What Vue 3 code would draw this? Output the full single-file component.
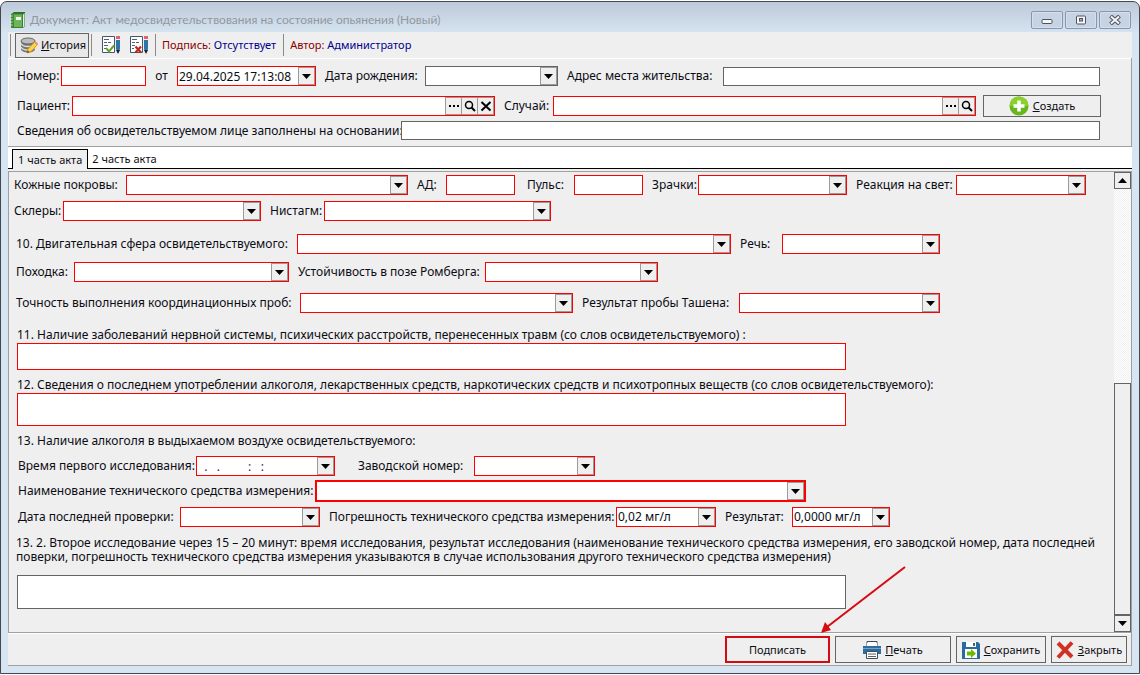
<script setup>
import { ref } from 'vue'

const activeTab = ref(1)

const examinationRows = [
  {
    name: 'skin',
    fields: [
      { id: 'skin', label: 'Кожные покровы:', kind: 'select' },
      { id: 'pressure', label: 'АД:', kind: 'text' },
      { id: 'pulse', label: 'Пульс:', kind: 'text', spaced: true },
      { id: 'pupils', label: 'Зрачки:', kind: 'select' },
      { id: 'light', label: 'Реакция на свет:', kind: 'select' },
    ],
  },
  {
    name: 'sclera',
    fields: [
      { id: 'sclera', label: 'Склеры:', kind: 'select' },
      { id: 'nystagmus', label: 'Нистагм:', kind: 'select' },
    ],
  },
  {
    name: 'motor',
    fields: [
      { id: 'motor', label: '10. Двигательная сфера освидетельствуемого:', kind: 'select' },
      { id: 'speech', label: 'Речь:', kind: 'select' },
    ],
  },
  {
    name: 'gait',
    fields: [
      { id: 'gait', label: 'Походка:', kind: 'select' },
      { id: 'romberg', label: 'Устойчивость в позе Ромберга:', kind: 'select' },
    ],
  },
  {
    name: 'accuracy',
    fields: [
      { id: 'accuracy', label: 'Точность выполнения координационных проб:', kind: 'select' },
      { id: 'tashen', label: 'Результат пробы Ташена:', kind: 'select' },
    ],
  },
]

const blank = (count) => '\u00a0'.repeat(count)
const emptyTimestamp = blank(2) + '.' + blank(3) + '.' + blank(9) + ':' + blank(3) + ':'

const alcoholRows = [
  {
    name: 'first-test',
    fields: [
      { id: 'first-time', label: 'Время первого исследования:', kind: 'date', value: emptyTimestamp, muted: true },
      { id: 'serial', label: 'Заводской номер:', kind: 'select', wide: true },
    ],
  },
  {
    name: 'device',
    fields: [
      { id: 'device', label: 'Наименование технического средства измерения:', kind: 'select', focus: true },
    ],
  },
  {
    name: 'check',
    fields: [
      { id: 'check-date', label: 'Дата последней проверки:', kind: 'date', value: '' },
      { id: 'error', label: 'Погрешность технического средства измерения:', kind: 'select', value: '0,02 мг/л' },
      { id: 'result', label: 'Результат:', kind: 'select', value: '0,0000 мг/л' },
    ],
  },
]
</script>

<template>
  <div class="window">
    <header class="titlebar">
      <svg class="book" viewBox="0 0 16 18" aria-hidden="true">
        <path d="M2 2.500 4 1h11v14l-2 2H2z" fill="#2f6b2b" />
        <path d="M13 3.500 14.500 2v13L13 16.500z" fill="#e7efe2" />
        <path d="M1.500 3h11v13.500h-11z" fill="#6db55a" stroke="#3c7f33" />
        <path d="M2 3.500h2V16H2z" fill="#3f8a38" />
        <path d="M6 6h5v3H6z" fill="#f1f8ea" />
        <path d="M0 5h2.500M0 8h2.500M0 11h2.500M0 14h2.500" stroke="#dce9d7" />
      </svg>
      <h1>Документ: Акт медосвидетельствования на состояние опьянения (Новый)</h1>
      <div class="window-buttons">
        <button type="button" aria-label="Свернуть">
          <svg viewBox="0 0 12 10"><rect x="1" y="4.500" width="10" height="4" rx="1" fill="#f6f6f6" stroke="#4d5262" /></svg>
        </button>
        <button type="button" aria-label="Развернуть">
          <svg viewBox="0 0 12 10"><rect x="1.500" y="1" width="9" height="8" rx="1" fill="#f6f6f6" stroke="#4d5262" /><rect x="4.500" y="3.500" width="3" height="2.500" fill="#9fb3c9" stroke="#4d5262" /></svg>
        </button>
        <button type="button" aria-label="Закрыть окно">
          <svg viewBox="0 0 12 10"><path d="m1.500 1 9 8M10.500 1l-9 8" stroke="#4d5262" stroke-width="4" /><path d="m2 1.500 8 7M10 1.500l-8 7" stroke="#f6f6f6" stroke-width="2" /></svg>
        </button>
      </div>
    </header>

    <main class="client">
      <nav class="toolbar" aria-label="Панель документа">
        <i class="divider"></i>
        <button type="button" class="history">
          <svg viewBox="0 0 18 17" aria-hidden="true">
            <path d="M1 4v8c0 2 3 3.500 7 3.500s7-1.500 7-3.500V4z" fill="#777" />
            <path d="M1 6.500c1 2 4 3 7 3s6-1 7-3M1 10c1 2 4 3 7 3s6-1 7-3" fill="none" stroke="#e0e0e0" stroke-width="1.500" />
            <ellipse cx="8" cy="4" rx="7" ry="3" fill="#bcbcbc" stroke="#666" />
            <path d="m7 16 1-4 6.500-7 3 2.500-6.500 7z" fill="#ffd43b" stroke="#c98b16" stroke-width=".8" />
            <path d="m14 5.500 1.500-1.500 2.500 2.500-1.300 1.500z" fill="#f08c86" />
            <path d="m7 16 .7-2.500L9.500 15z" fill="#654321" />
          </svg>
          <span><u>И</u>стория</span>
        </button>
        <i class="divider"></i>
        <button type="button" class="tool" aria-label="Подписать документ">
          <svg viewBox="0 0 18 18" aria-hidden="true">
            <path d="M.5.500h12v16H.500z" fill="#fff" stroke="#41596a" />
            <path d="M2 3.500h5M2 6.500h3M6 6.500h3M2 9.500h4M2 12.500h2" stroke="#50616e" />
            <path d="m4 12 3 3.500 5-6" fill="none" stroke="#67a22d" stroke-width="2" />
            <path d="M14 4h4v9l-2 4-2-4z" fill="#2c74aa" /><path d="M14 0h4v3h-4z" fill="#e8606b" /><path d="M14 14h4l-2 4z" fill="#222" />
          </svg>
        </button>
        <button type="button" class="tool" aria-label="Отменить подпись">
          <svg viewBox="0 0 18 18" aria-hidden="true">
            <path d="M.5.500h12v16H.500z" fill="#fff" stroke="#41596a" />
            <path d="M2 3.500h5M2 6.500h3M6 6.500h3M2 9.500h3M2 12.500h2" stroke="#50616e" />
            <path d="m5.500 10.500 5.500 6M11 10.500l-5.500 6" stroke="#c3251b" stroke-width="2.200" />
            <path d="M14 4h4v9l-2 4-2-4z" fill="#2c74aa" /><path d="M14 0h4v3h-4z" fill="#e8606b" /><path d="M14 14h4l-2 4z" fill="#222" />
          </svg>
        </button>
        <i class="divider"></i>
        <p class="info"><span>Подпись:</span> Отсутствует</p>
        <i class="divider"></i>
        <p class="info"><span>Автор:</span> Администратор</p>
      </nav>

      <section class="head">
        <div class="head-row first">
          <label for="number">Номер:</label>
          <input id="number" class="box" type="text" />
          <label for="date" class="center">от</label>
          <div class="combo">
            <input id="date" type="text" value="29.04.2025 17:13:08" />
            <button type="button" class="drop" aria-label="Выбрать дату"><svg viewBox="0 0 9 5"><path d="M0 0h9L4.500 5z" /></svg></button>
          </div>
          <label for="birth" class="after">Дата рождения:</label>
          <div class="combo plain">
            <input id="birth" type="text" />
            <button type="button" class="drop" aria-label="Выбрать дату рождения"><svg viewBox="0 0 9 5"><path d="M0 0h9L4.500 5z" /></svg></button>
          </div>
          <label for="address" class="after">Адрес места жительства:</label>
          <input id="address" class="box plain" type="text" />
        </div>
        <div class="head-row second">
          <label for="patient">Пациент:</label>
          <div class="lookup">
            <input id="patient" type="text" />
            <button type="button" aria-label="Список пациентов"><svg viewBox="0 0 12 12"><path d="M1 5h2v2H1zM5 5h2v2H5zM9 5h2v2H9z" /></svg></button>
            <button type="button" aria-label="Найти пациента"><svg viewBox="0 0 12 12"><circle cx="5" cy="5" r="3.500" fill="none" stroke="#000" stroke-width="1.500" /><path d="m7.500 7.500 3.500 3.500" stroke="#000" stroke-width="2" /></svg></button>
            <button type="button" aria-label="Очистить пациента"><svg viewBox="0 0 12 12"><path d="m1.500 2 9 8.500M10.500 2l-9 8.500" stroke="#000" stroke-width="2" /></svg></button>
          </div>
          <label for="case" class="after">Случай:</label>
          <div class="lookup">
            <input id="case" type="text" />
            <button type="button" aria-label="Список случаев"><svg viewBox="0 0 12 12"><path d="M1 5h2v2H1zM5 5h2v2H5zM9 5h2v2H9z" /></svg></button>
            <button type="button" aria-label="Найти случай"><svg viewBox="0 0 12 12"><circle cx="5" cy="5" r="3.500" fill="none" stroke="#000" stroke-width="1.500" /><path d="m7.500 7.500 3.500 3.500" stroke="#000" stroke-width="2" /></svg></button>
          </div>
          <button type="button" class="command create">
            <svg viewBox="0 0 20 20" aria-hidden="true"><circle cx="10" cy="10" r="9.500" fill="#67b51f" /><path d="M.5 10a9.500 9.500 0 0 1 19 0z" fill="#8bd02c" /><path d="M10 4.500v11M4.500 10h11" stroke="#fff" stroke-width="3.500" /></svg>
            <span><u>С</u>оздать</span>
          </button>
        </div>
        <div class="head-row third">
          <label for="basis">Сведения об освидетельствуемом лице заполнены на основании:</label>
          <input id="basis" class="box plain" type="text" />
        </div>
      </section>

      <div class="tabs" role="tablist">
        <button type="button" role="tab" :class="{ active: activeTab === 1 }" :aria-selected="activeTab === 1" @click="activeTab = 1">1 часть акта</button>
        <button type="button" role="tab" :class="{ active: activeTab === 2 }" :aria-selected="activeTab === 2" @click="activeTab = 2">2 часть акта</button>
      </div>

      <section class="sheet">
        <form class="form" @submit.prevent>
          <div v-for="row in examinationRows" :key="row.name" :class="['row', row.name]">
            <template v-for="field in row.fields" :key="field.id">
              <label :for="field.id" :class="{ spaced: field.spaced }">{{ field.label }}</label>
              <div v-if="field.kind === 'select'" class="combo">
                <select :id="field.id"><option></option></select>
                <span class="drop"><svg viewBox="0 0 9 5"><path d="M0 0h9L4.500 5z" /></svg></span>
              </div>
              <input v-else :id="field.id" class="box" type="text" />
            </template>
          </div>

          <label for="diseases" class="heading diseases">11. Наличие заболеваний нервной системы, психических расстройств, перенесенных травм (со слов освидетельствуемого) :</label>
          <textarea id="diseases" class="note required short"></textarea>
          <label for="usage" class="heading usage">12. Сведения о последнем употреблении алкоголя, лекарственных средств, наркотических средств и психотропных веществ (со слов освидетельствуемого):</label>
          <textarea id="usage" class="note required"></textarea>
          <h2 class="heading alcohol">13. Наличие алкоголя в выдыхаемом воздухе освидетельствуемого:</h2>

          <div v-for="row in alcoholRows" :key="row.name" :class="['row', row.name]">
            <template v-for="field in row.fields" :key="field.id">
              <label :for="field.id" :class="{ wide: field.wide }">{{ field.label }}</label>
              <div :class="['combo', { focus: field.focus }]">
                <select v-if="field.kind === 'select'" :id="field.id"><option>{{ field.value }}</option></select>
                <input v-else :id="field.id" type="text" :value="field.value" :class="{ muted: field.muted }" />
                <span v-if="field.kind === 'select'" class="drop"><svg viewBox="0 0 9 5"><path d="M0 0h9L4.500 5z" /></svg></span>
                <button v-else type="button" class="drop" aria-label="Выбрать дату"><svg viewBox="0 0 9 5"><path d="M0 0h9L4.500 5z" /></svg></button>
              </div>
            </template>
          </div>

          <label for="second" class="heading second-test">13. 2. Второе исследование через 15 – 20 минут: время исследования, результат исследования (наименование технического средства измерения, его заводской номер, дата последней поверки, погрешность технического средства измерения указываются в случае использования другого технического средства измерения)</label>
          <textarea id="second" class="note tall"></textarea>
        </form>
        <div class="scrollbar">
          <button type="button" aria-label="Вверх"><svg viewBox="0 0 9 5"><path d="M0 5h9L4.500 0z" /></svg></button>
          <div class="track"></div>
          <div class="thumb"></div>
          <button type="button" aria-label="Вниз"><svg viewBox="0 0 9 5"><path d="M0 0h9L4.500 5z" /></svg></button>
        </div>
      </section>

      <footer class="footer">
        <div class="sign-wrap">
          <button type="button" class="command sign">Подписать</button>
          <svg class="pointer" viewBox="0 0 88 70" aria-hidden="true"><path d="M85 2 7 62" stroke="#d50b12" stroke-width="2" /><path d="m1 68 4-11 6 8z" fill="#d50b12" /></svg>
        </div>
        <button type="button" class="command print">
          <svg viewBox="0 0 18 18" aria-hidden="true"><path d="M4 .500h10V7H4z" fill="#fff" stroke="#404b54" /><path d="M0 5h18v8H0z" fill="#2d6c9e" /><path d="M4 5h10V2H4z" fill="#fff" /><path d="M0 7.500h18" stroke="#75a3c5" /><path d="M3.500 10.500h11v7h-11z" fill="#fff" stroke="#404b54" /><path d="M5 13h8M5 15.500h8" stroke="#56616b" /></svg>
          <span><u>П</u>ечать</span>
        </button>
        <button type="button" class="command save">
          <svg viewBox="0 0 18 18" aria-hidden="true"><path d="M0 1h16l2 2v15H0z" fill="#2a6b9f" /><path d="M4 1h10v5H4z" fill="#fff" /><path d="M11 2h2v3h-2z" fill="#47627a" /><path d="M3 8h12v9H3z" fill="#fff" /><path d="M5 10.500h4V8l5 4.500L9 17v-2.500H5z" fill="#70b700" /></svg>
          <span><u>С</u>охранить</span>
        </button>
        <button type="button" class="command close">
          <svg viewBox="0 0 18 18" aria-hidden="true"><path d="m2 2 14 14M16 1.500 2 16.500" stroke="#cf3222" stroke-width="4" /></svg>
          <span><u>З</u>акрыть</span>
        </button>
      </footer>
    </main>
  </div>
</template>

<style>
body {
  background: #fff;
}
</style>

<style scoped>
* {
  box-sizing: border-box;
}
.window {
  display: flex;
  flex-direction: column;
  min-height: calc(100vh - 2px);
  margin: 1px 0;
  padding: 0 7px 7px;
  border: 1px solid #45474c;
  border-radius: 7px 7px 0 0;
  background: linear-gradient(#bccad9 0, #d7e4f2 32px, #d7e4f2);
  color: #0c0c14;
  font: 12px/14px "Noto Sans", "DejaVu Sans", sans-serif;
}
button,
input,
select,
textarea {
  margin: 0;
  padding: 0;
  border-radius: 0;
  font: inherit;
  color: inherit;
}
.titlebar {
  display: flex;
  align-items: center;
  height: 30px;
  padding: 6px 1px 0 2px;
}
.book {
  width: 16px;
  height: 18px;
  margin-right: 4px;
}
h1 {
  flex: 1;
  margin: 0;
  font-family: Lato, "Noto Sans", sans-serif;
  font-size: 12px;
  font-weight: 400;
  color: #92979e;
  white-space: nowrap;
}
.window-buttons {
  display: flex;
  gap: 2px;
}
.window-buttons button {
  display: grid;
  place-items: center;
  width: 32px;
  height: 18px;
  border: 1px solid #8795af;
  border-radius: 2px;
  background: #c5d3e2;
  box-shadow: inset 0 0 0 1px #d5e0ec;
}
.window-buttons svg {
  width: 12px;
  height: 10px;
}
.client {
  display: flex;
  flex: 1;
  flex-direction: column;
  background: #efefef;
}
.toolbar {
  display: flex;
  align-items: center;
  height: 26px;
  padding-left: 2px;
  font-size: 11px;
}
.divider {
  width: 1px;
  height: 22px;
  background: #8a8a8a;
}
.history {
  display: flex;
  align-items: center;
  gap: 3px;
  width: 74px;
  height: 25px;
  margin: 0 2px 0 4px;
  padding: 0 0 0 4px;
  border: 1px solid #666;
  background: #e8e8e8;
}
.history svg {
  flex: none;
  width: 18px;
  height: 17px;
}
.tool {
  width: 18px;
  height: 18px;
  margin-left: 10px;
  border: 0;
  background: none;
}
.tool + .divider {
  margin-left: 7px;
}
.tool svg {
  display: block;
}
.info {
  margin: 0 7px 0 6px;
  color: #00008b;
  white-space: nowrap;
}
.info span {
  color: #8b0000;
}
.head {
  padding: 7px 31px 6px 9px;
  border: 1px solid #a0a0a0;
  border-width: 0 1px 1px 0;
  box-shadow: inset 1px 1px #fff;
}
.head-row {
  display: grid;
  align-items: center;
}
.first {
  grid-template-columns: 44px minmax(60px, 85fr) 31px 139px 109px minmax(60px, 133fr) 165px minmax(80px, 377fr);
  height: 22px;
}
.second {
  grid-template-columns: 55px minmax(120px, 423fr) 58px minmax(120px, 423fr) 118px;
  height: 22px;
  margin-top: 8px;
  padding-right: 6px;
}
.third {
  grid-template-columns: 384px 1fr;
  height: 19px;
  margin-top: 4px;
}
label {
  white-space: nowrap;
}
.center {
  text-align: center;
}
.after {
  padding-left: 9px;
}
.box {
  width: 100%;
  min-width: 0;
  height: 20px;
  padding: 0 2px;
  border: 1px solid #f00;
  background: #fff;
}
.combo,
.lookup {
  display: grid;
  grid-template-columns: 1fr 17px;
  min-width: 0;
  height: 20px;
  border: 1px solid #f00;
  background: #fff;
}
.plain {
  border-color: #646464;
}
.head .box.plain {
  height: 19px;
}
.combo > select,
.combo > input,
.lookup > input {
  grid-row: 1;
  grid-column: 1 / 2;
  width: 100%;
  min-width: 0;
  height: 100%;
  padding: 0 1px;
  border: 0;
  outline: 0;
  background: transparent;
}
.combo > select {
  grid-column: 1 / 3;
  appearance: none;
}
.drop {
  display: grid;
  grid-row: 1;
  grid-column: 2;
  place-items: center;
  border: 1px solid #9a9a9a;
  background: #efefef;
}
span.drop {
  pointer-events: none;
}
.drop svg,
.scrollbar svg {
  width: 9px;
  height: 5px;
}
.lookup {
  display: flex;
}
.lookup > input {
  flex: 1;
}
.lookup > button {
  display: grid;
  place-items: center;
  width: 17px;
  margin-left: -1px;
  border: 1px solid #9a9a9a;
  background: #efefef;
}
.lookup svg {
  width: 12px;
  height: 12px;
}
.muted {
  color: #303050;
}
.command {
  display: flex;
  align-items: center;
  justify-content: center;
  gap: 4px;
  height: 27px;
  border: 1px solid #646464;
  background: #efefef;
  font-size: 11px;
  white-space: nowrap;
}
.command svg {
  flex: none;
  width: 18px;
  height: 18px;
}
.create {
  width: 118px;
  height: 22px;
  margin-left: 7px;
}
.create svg {
  width: 20px;
  height: 20px;
}
.tabs {
  display: flex;
  height: 22px;
  padding: 2px 0 0 4px;
  background: #fff;
  box-shadow: inset 0 -1px #000;
}
.tabs button {
  padding: 0 4px;
  border: 0;
  background: none;
  font-size: 11px;
  white-space: nowrap;
}
.tabs .active {
  padding: 0 5px;
  border: 1px solid #000;
  border-bottom: 0;
  background: #efefef;
}
.sheet {
  display: flex;
  flex: 1;
  margin-top: 2px;
  border: 1px solid #a0a0a0;
}
.form {
  flex: 1;
  min-width: 0;
  padding: 3px 0 20px;
}
.row {
  display: grid;
  align-items: center;
}
.row label + div + label,
.row label + input + label {
  padding-left: 9px;
}
.row label.spaced {
  padding-left: 12px;
}
.row label.wide {
  padding-left: 23px;
}
.skin {
  grid-template-columns: 112px minmax(60px, 282fr) 38px minmax(30px, 69fr) 59px minmax(30px, 69fr) 55px minmax(60px, 149fr) 109px minmax(60px, 130fr) 28fr;
  padding-left: 5px;
}
.sclera {
  grid-template-columns: 49px 198fr 63px 227fr 563fr;
  margin-top: 6px;
  padding-left: 5px;
}
.motor {
  grid-template-columns: 281px 434fr 51px 158fr 174fr;
  margin-top: 13px;
  padding-left: 7px;
}
.gait {
  grid-template-columns: 58px 215fr 196px 173fr 456fr;
  margin-top: 8px;
  padding-left: 7px;
}
.accuracy {
  grid-template-columns: 284px 273fr 166px 201fr 174fr;
  margin-top: 11px;
  padding-left: 7px;
}
.heading {
  display: block;
  margin: 0 0 0 8px;
  font-size: 12px;
  font-weight: 400;
  white-space: normal;
}
.diseases {
  margin-top: 15px;
}
.usage {
  margin-top: 8px;
}
.alcohol {
  margin: 8px 0 8px 8px;
}
.note {
  display: block;
  width: 75%;
  height: 33px;
  margin: 1px 0 0 8px;
  padding: 2px;
  border: 1px solid #646464;
  outline: 0;
  background: #fff;
  resize: none;
}
.note.required {
  border-color: #f00;
}
.note.short {
  height: 27px;
}
.note.tall {
  height: 34px;
}
.first-test {
  grid-template-columns: 178px 139fr 139px 121fr 519fr;
  padding-left: 9px;
}
.device {
  grid-template-columns: 297px 491fr 308fr;
  margin-top: 4px;
  padding-left: 9px;
}
.check {
  grid-template-columns: 162px 140fr 296px 100fr 76px 98fr 224fr;
  margin-top: 5px;
  padding-left: 9px;
}
.focus {
  height: 22px;
  border-width: 2px;
}
.second-test {
  margin: 9px 12px 11px 7px;
}
.scrollbar {
  display: flex;
  flex-direction: column;
  width: 17px;
}
.scrollbar button {
  display: grid;
  place-items: center;
  height: 17px;
  border: 1px solid #646464;
  background: #efefef;
}
.track {
  flex: 195;
  background: repeating-conic-gradient(#efefef 0 25%, #fff 0 50%) 0 0 / 2px 2px;
}
.thumb {
  flex: 231;
  border: 1px solid #646464;
}
.footer {
  display: flex;
  justify-content: flex-end;
  gap: 5px;
  padding: 3px 4px 2px;
  border: 1px solid #a0a0a0;
  border-width: 0 1px 1px 0;
  box-shadow: inset 0 1px #fff;
}
.sign-wrap {
  position: relative;
}
.sign {
  width: 105px;
  border: 2px solid #d50b12;
}
.pointer {
  position: absolute;
  bottom: 28px;
  left: 95px;
  width: 88px;
  height: 70px;
  pointer-events: none;
}
.print {
  width: 116px;
}
.save {
  width: 90px;
}
.close {
  width: 76px;
}
</style>
